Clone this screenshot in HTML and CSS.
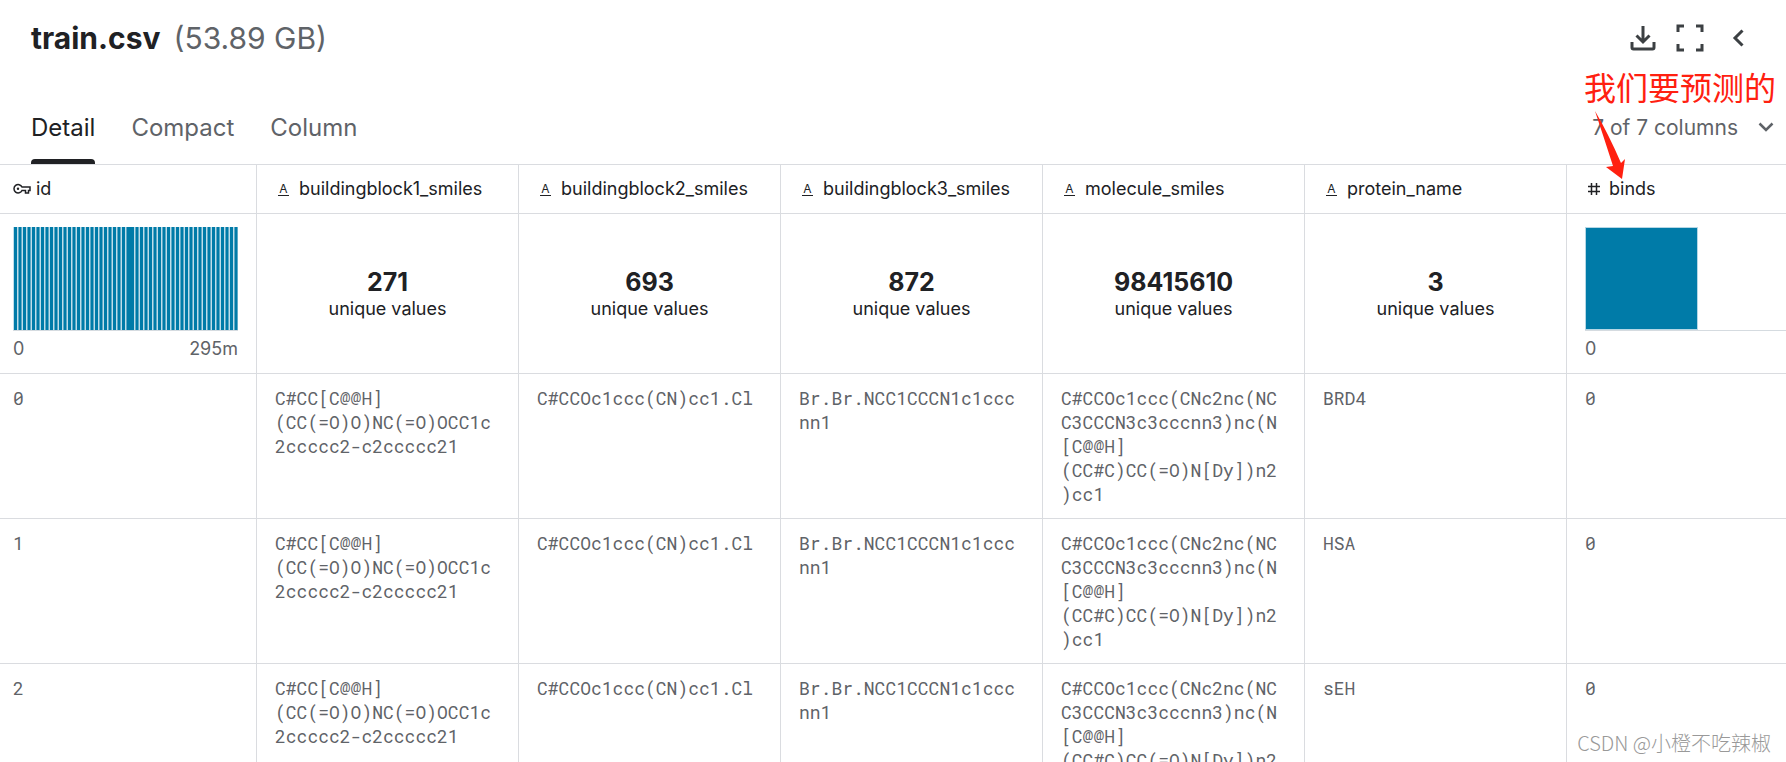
FILE: index.html
```html
<!DOCTYPE html>
<html lang="en">
<head>
<meta charset="utf-8">
<title>train.csv</title>
<link rel="stylesheet" href="styles.css">
</head>
<body>
<main class="viewer">
  <header class="titlebar">
    <h1 class="title">train.csv <span class="size">(53.89 GB)</span></h1>
    <div class="actions">
      <button class="icon-button" aria-label="Download">
        <svg width="26" height="26" viewBox="0 0 26 26" fill="none" stroke="#3c4043" stroke-width="3"><path d="M13 1V16M6.500 10.500 13 17 19.500 10.500M2 17V22.500Q2 24 3.500 24H22.500Q24 24 24 22.500V17"/></svg>
      </button>
      <button class="icon-button" aria-label="Fullscreen">
        <svg width="28" height="28" viewBox="0 0 28 28" fill="none" stroke="#3c4043" stroke-width="3"><path d="M2 8V2H8M20 2H26V8M26 20V26H20M8 26H2V20"/></svg>
      </button>
      <button class="icon-button collapse" aria-label="Collapse">
        <svg width="12" height="18" viewBox="0 0 12 18" fill="none" stroke="#3c4043" stroke-width="3"><path d="M10.500 1.500 3 9 10.500 16.500"/></svg>
      </button>
    </div>
  </header>

  <div class="tabbar">
    <nav class="tabs">
      <button class="tab active">Detail</button>
      <button class="tab">Compact</button>
      <button class="tab">Column</button>
    </nav>
    <button class="columns-button">7 of 7 columns
      <svg width="16" height="10" viewBox="0 0 16 10" fill="none" stroke="#5f6368" stroke-width="2.500"><path d="M1.500 1.500 8 8 14.500 1.500"/></svg>
    </button>
    <div class="note">
      <span class="note-text">我们要预测的</span>
      <svg class="note-arrow" width="36" height="72" viewBox="0 0 36 72"><path d="M3 3Q16 25 29 55L33 51 30 71 14 59 21 58Q12 30 3 3Z" fill="#ff2010"/></svg>
    </div>
  </div>

  <table class="grid">
    <colgroup><col class="col-id"><col class="col"><col class="col"><col class="col"><col class="col"><col class="col"><col class="col"></colgroup>
    <thead>
      <tr class="names">
        <th class="key"><span class="name"><svg width="18" height="12" viewBox="0 0 18 12" fill="none" stroke="#202124" stroke-width="1.500"><path d="M9 4H17V7.500H15.500V10H12.500V7.500H9A4.200 4.200 0 1 1 9 4Z"/><circle cx="5" cy="5.800" r="1.200" fill="#202124" stroke="none"/></svg>id</span></th>
        <th><span class="name"><span class="type">A</span>buildingblock1_smiles</span></th>
        <th><span class="name"><span class="type">A</span>buildingblock2_smiles</span></th>
        <th><span class="name"><span class="type">A</span>buildingblock3_smiles</span></th>
        <th><span class="name"><span class="type">A</span>molecule_smiles</span></th>
        <th><span class="name"><span class="type">A</span>protein_name</span></th>
        <th class="number"><span class="name"><svg width="14" height="14" viewBox="0 0 14 14" fill="none" stroke="#202124" stroke-width="1.500"><path d="M4.500 1V13M9.500 1V13M1 4.500H13M1 9.500H13"/></svg>binds</span></th>
      </tr>
      <tr class="summary">
        <td class="chart-cell"><div class="chart bars"></div><div class="axis"><span>0</span><span>295m</span></div></td>
        <td><strong>271</strong>unique values</td>
        <td><strong>693</strong>unique values</td>
        <td><strong>872</strong>unique values</td>
        <td><strong>98415610</strong>unique values</td>
        <td><strong>3</strong>unique values</td>
        <td class="chart-cell"><div class="chart"><div class="block"></div></div><div class="axis"><span>0</span></div></td>
      </tr>
    </thead>
    <tbody>
      <tr><td>0</td><td>C#CC[C@@H](CC(=O)O)NC(=O)OCC1c2ccccc2-c2ccccc21</td><td>C#CCOc1ccc(CN)cc1.Cl</td><td>Br.Br.NCC1CCCN1c1cccnn1</td><td>C#CCOc1ccc(CNc2nc(NCC3CCCN3c3cccnn3)nc(N[C@@H](CC#C)CC(=O)N[Dy])n2)cc1</td><td>BRD4</td><td>0</td></tr>
      <tr><td>1</td><td>C#CC[C@@H](CC(=O)O)NC(=O)OCC1c2ccccc2-c2ccccc21</td><td>C#CCOc1ccc(CN)cc1.Cl</td><td>Br.Br.NCC1CCCN1c1cccnn1</td><td>C#CCOc1ccc(CNc2nc(NCC3CCCN3c3cccnn3)nc(N[C@@H](CC#C)CC(=O)N[Dy])n2)cc1</td><td>HSA</td><td>0</td></tr>
      <tr><td>2</td><td>C#CC[C@@H](CC(=O)O)NC(=O)OCC1c2ccccc2-c2ccccc21</td><td>C#CCOc1ccc(CN)cc1.Cl</td><td>Br.Br.NCC1CCCN1c1cccnn1</td><td>C#CCOc1ccc(CNc2nc(NCC3CCCN3c3cccnn3)nc(N[C@@H](CC#C)CC(=O)N[Dy])n2)cc1</td><td>sEH</td><td>0</td></tr>
    </tbody>
  </table>
  <p class="watermark">CSDN @小橙不吃辣椒</p>
</main>
</body>
</html>
```
FILE: styles.css
```css
* { box-sizing: border-box; }

body {
  margin: 0;
  background: #fff;
  color: #202124;
  font-family: Inter, "Noto Sans CJK SC", sans-serif;
  font-size: 18px;
}

button {
  padding: 0;
  border: 0;
  background: none;
  color: inherit;
  font: inherit;
}

svg { display: block; }

.viewer {
  position: relative;
  height: 100vh;
  overflow: hidden;
}

.titlebar {
  display: flex;
  align-items: center;
  justify-content: space-between;
  padding: 20px 42px 20px 31px;
}

.title {
  display: flex;
  gap: 13px;
  margin: 0;
  font-size: 30px;
  line-height: 36px;
  font-weight: 700;
}

.size {
  color: #5f6368;
  font-weight: 400;
}

.actions {
  display: flex;
  align-items: center;
  gap: 20px;
}

.collapse { padding-left: 8px; }

.tabbar {
  position: relative;
  display: flex;
  align-items: stretch;
  justify-content: space-between;
  padding: 16px 12px 0 31px;
}

.tabs {
  display: flex;
  gap: 36px;
}

.tab {
  position: relative;
  height: 72px;
  padding-bottom: 2px;
  color: #5f6368;
  font-size: 24px;
}

.tab.active { color: #202124; }

.tab.active::after {
  content: "";
  position: absolute;
  left: 0;
  right: 0;
  bottom: 0;
  height: 5px;
  border-radius: 4px 4px 0 0;
  background: #202124;
}

.columns-button {
  display: flex;
  align-items: center;
  gap: 20px;
  padding-bottom: 2px;
  color: #5f6368;
  font-size: 21px;
}

.note {
  position: absolute;
  right: 10px;
  top: -7px;
  color: #ff2010;
  font-size: 32px;
  line-height: 40px;
}

.note-arrow {
  position: absolute;
  left: 8px;
  top: 39px;
}

.grid {
  width: 1829px;
  border-collapse: separate;
  border-spacing: 0;
  table-layout: fixed;
  border-top: 1px solid #dadce0;
}

.col-id { width: 257px; }
.col { width: 262px; }

.grid th,
.grid td {
  padding: 12px 18px;
  border-right: 1px solid #dadce0;
  border-bottom: 1px solid #dadce0;
  text-align: left;
  vertical-align: top;
}

.grid th:first-child,
.grid td:first-child { padding-left: 13px; }

.grid .names th {
  padding-left: 21px;
  font-weight: 400;
  line-height: 24px;
}

.grid .names .key { padding-left: 13px; }
.grid .names .number { padding-left: 20px; }

.name {
  display: flex;
  align-items: center;
  gap: 10px;
}

.key .name { gap: 5px; }
.number .name { gap: 8px; }

.type {
  width: 11px;
  border-bottom: 1px solid #202124;
  font-size: 12px;
  line-height: 12px;
  text-align: center;
}

.grid .summary td {
  height: 160px;
  text-align: center;
  vertical-align: middle;
  line-height: 24px;
}

.summary strong {
  display: block;
  font-size: 25px;
  line-height: 30px;
}

.grid .summary .chart-cell {
  padding-top: 13px;
  vertical-align: top;
}

.chart {
  height: 104px;
  border-bottom: 1px solid #d5dbe0;
}

.block {
  width: 113px;
  height: 103px;
  border: 1px solid #b5d7e5;
  background: #007ba8;
}

.bars {
  background:
    linear-gradient(#007ba8, #007ba8) 114px 0 / 5px 100% no-repeat,
    repeating-linear-gradient(90deg, #bfdeea 0 1px, #007ba8 1px 4px, #bfdeea 4px 5px, #5fabc7 5px 6px, #007ba8 6px 8px, #5fabc7 8px 9px);
}

.axis {
  display: flex;
  justify-content: space-between;
  padding-top: 6px;
  color: #5f6368;
}

.grid tbody td {
  color: #5f6368;
  font-family: "Roboto Mono", "Liberation Mono", monospace;
  line-height: 24px;
  overflow-wrap: anywhere;
}

.watermark {
  position: absolute;
  right: 15px;
  bottom: 6px;
  margin: 0;
  color: #999;
  font-family: "Noto Sans CJK SC", sans-serif;
  font-size: 20px;
  font-weight: 300;
  line-height: 26px;
}
```
